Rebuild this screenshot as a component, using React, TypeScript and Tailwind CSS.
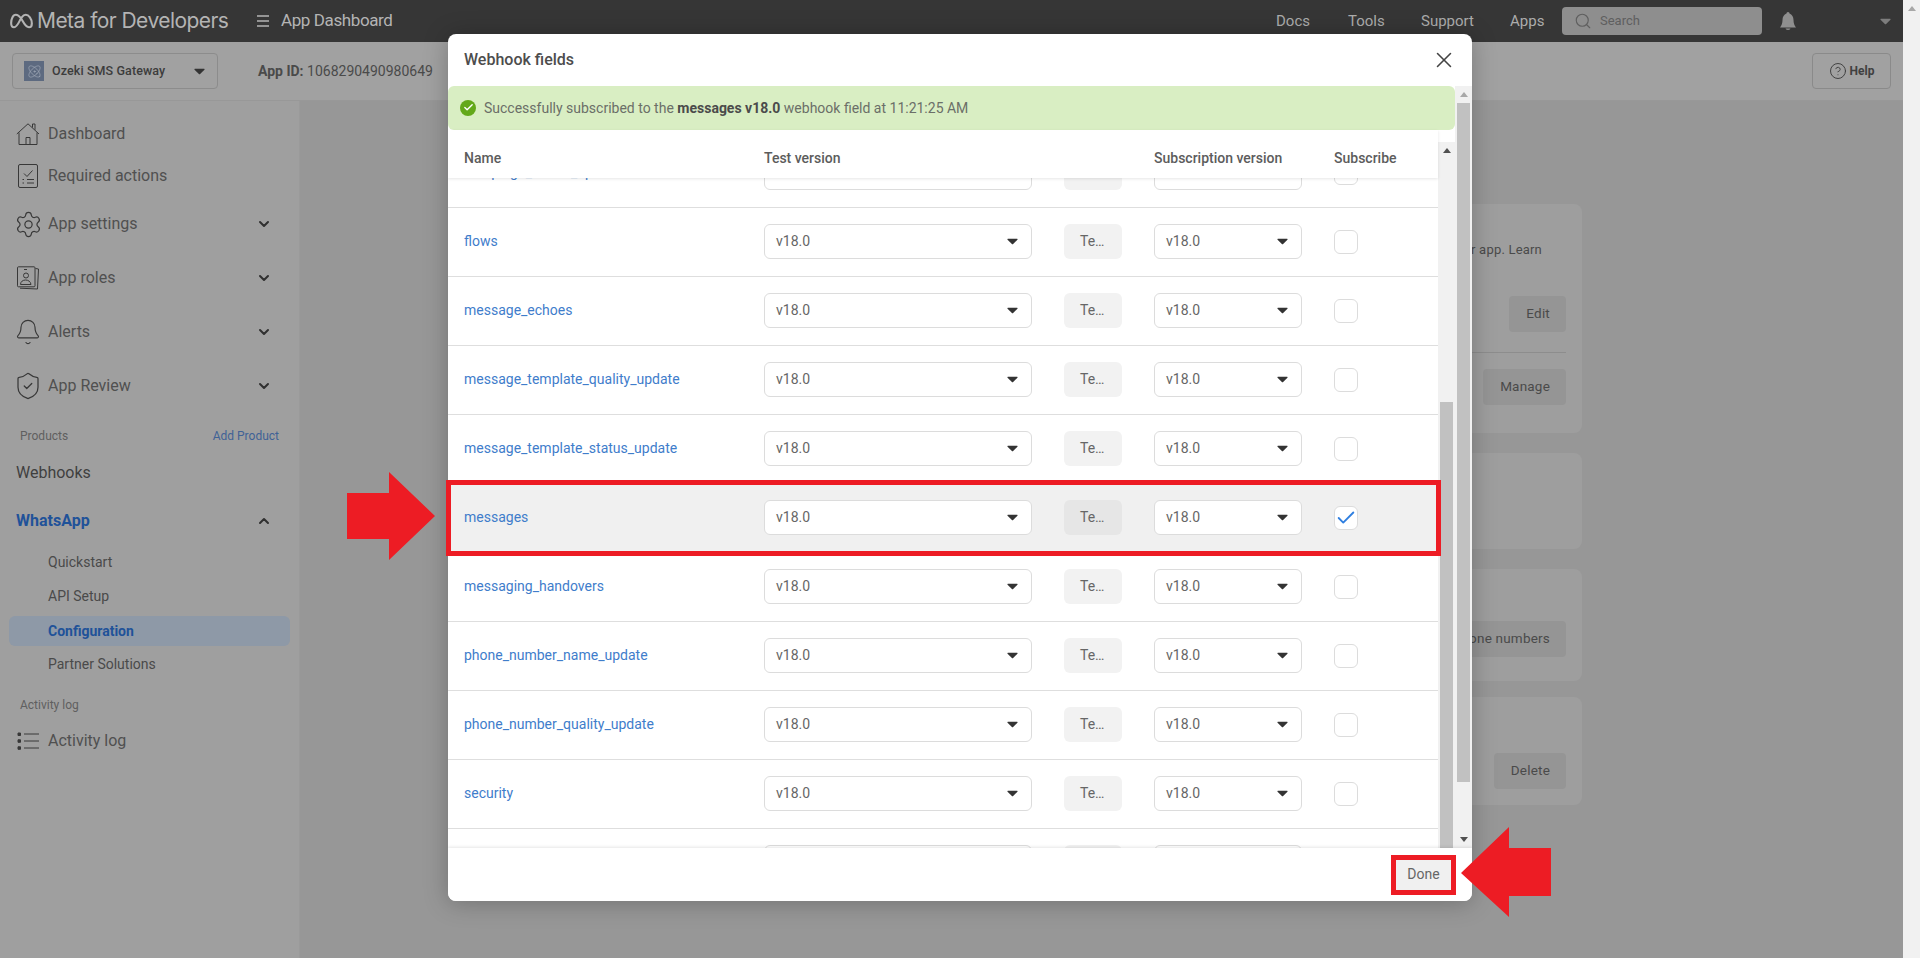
import { Atom, Bell, Check, ChevronDown, ChevronUp, CircleHelp, Search, Settings, ShieldCheck, X } from "lucide-react";
import type { ReactNode } from "react";

const fields = [
  "campaign_status_update",
  "flows",
  "message_echoes",
  "message_template_quality_update",
  "message_template_status_update",
  "messages",
  "messaging_handovers",
  "phone_number_name_update",
  "phone_number_quality_update",
  "security",
  "template_category_update",
];

const rowGrid = "grid grid-cols-[268px_268px_58px_148px_1fr] gap-x-8 items-center pl-4";

function Caret({ className }: { className: string }) {
  return (
    <svg viewBox="0 0 12 7" className={className} fill="currentColor">
      <path d="M1 0.5h10a.6.6 0 0 1 .4 1L6.4 6.4a.6.6 0 0 1-.8 0L.6 1.5A.6.6 0 0 1 1 .5z" />
    </svg>
  );
}

function ScrollArrow({ up, className }: { up?: boolean; className: string }) {
  return (
    <div className={`h-[17px] w-[17px] shrink-0 flex items-center justify-center ${className}`}>
      <svg viewBox="0 0 8 5" className="w-2 h-[5px]" fill="currentColor">
        <path d={up ? "M4 0l4 5H0z" : "M0 0h8L4 5z"} />
      </svg>
    </div>
  );
}

function HomeIcon() {
  return (
    <svg viewBox="0 0 24 24" className="w-6 h-6" fill="none" stroke="currentColor" strokeWidth="1">
      <path d="M0.8 12 12 1.8l11 10.2M3 10.5V22.500h18V10.500M10 22.500v-7h4v7M16.500 5.500V2h2.500v5.800" />
    </svg>
  );
}

function ChecklistIcon() {
  return (
    <svg viewBox="0 0 24 24" className="w-6 h-6" fill="none" stroke="currentColor" strokeWidth="1">
      <rect x="2.5" y="0.5" width="19" height="23" rx="1.5" />
      <path d="M8 9.500l3 3 5.500-6M11 15.500h7M11 19h7M6.500 15.500h1.500M6.500 19h1.500" />
    </svg>
  );
}

function RolesIcon() {
  return (
    <svg viewBox="0 0 24 24" className="w-6 h-6" fill="none" stroke="currentColor" strokeWidth="1">
      <path d="M19.500 2.500l3 .5-1 20-17.500-.8" />
      <rect x="1.5" y="0.8" width="17.5" height="20" rx="1" />
      <path d="M8 3.500h3" />
      <circle cx="10" cy="9.5" r="2.5" />
      <path d="M4.500 18.500c0-6 10-6 10.500 0z" />
    </svg>
  );
}

function ListIcon() {
  return (
    <svg viewBox="0 0 24 24" className="w-6 h-6" fill="none" stroke="currentColor" strokeWidth="1">
      <path d="M8 5h15M8 12h15M8 19h15" />
      <path d="M2 4h2.500v2.500H2zM2 10.800h2.500v2.500H2zM2 17.800h2.500v2.500H2z" fill="currentColor" />
    </svg>
  );
}

function NavItem({ icon, label, tall }: { icon: ReactNode; label: string; tall?: boolean }) {
  return (
    <div className={`flex items-center pl-4 pr-[27px] text-base text-[#505050] ${tall ? "h-[54px]" : "h-[42px]"}`}>
      <span className="w-6 h-6 mr-2 flex items-center justify-center text-[#383838]">{icon}</span>
      <span className="flex-1">{label}</span>
      {tall ? <ChevronDown size={16} strokeWidth={3} className="text-[#303030]" /> : null}
    </div>
  );
}

function SubItem({ label, active }: { label: string; active?: boolean }) {
  if (active) {
    return (
      <div className="h-[34px] pt-[3px]">
        <div className="mx-[9px] h-[30px] pl-[39px] pb-px flex items-center rounded-md bg-[#8e99a7] text-sm font-bold text-[#1f5299]">
          {label}
        </div>
      </div>
    );
  }
  return <div className="h-[34px] pl-12 flex items-center text-sm text-[#4a4a4a]">{label}</div>;
}

function Sidebar() {
  return (
    <aside className="w-[300px] shrink-0 pt-3 bg-[#9f9f9f] border-r border-[#9a9a9a]">
      <NavItem icon={<HomeIcon />} label="Dashboard" />
      <NavItem icon={<ChecklistIcon />} label="Required actions" />
      <NavItem tall icon={<Settings size={29} strokeWidth={1} className="shrink-0" />} label="App settings" />
      <NavItem tall icon={<RolesIcon />} label="App roles" />
      <NavItem tall icon={<Bell size={28} strokeWidth={1} className="shrink-0" />} label="Alerts" />
      <NavItem tall icon={<ShieldCheck size={30} strokeWidth={1} className="shrink-0" />} label="App Review" />
      <div className="mt-[11px] h-6 pl-5 pr-5 flex items-center justify-between text-xs">
        <span className="text-[#606060]">Products</span>
        <span className="text-[#3f6296]">Add Product</span>
      </div>
      <div className="mt-px h-12 pl-4 flex items-center text-base text-[#3f3f3f]">Webhooks</div>
      <div className="h-12 pl-4 pr-[27px] flex items-center justify-between text-base font-bold text-[#1f5299]">
        WhatsApp
        <ChevronUp size={16} strokeWidth={3} className="text-[#303030]" />
      </div>
      <div>
        <SubItem label="Quickstart" />
        <SubItem label="API Setup" />
        <SubItem label="Configuration" active />
        <SubItem label="Partner Solutions" />
      </div>
      <div className="mt-3 h-6 pl-5 flex items-center text-xs text-[#606060]">Activity log</div>
      <div className="h-12 pl-4 flex items-center text-base text-[#505050]">
        <span className="w-6 h-6 mr-2 text-[#383838]">
          <ListIcon />
        </span>
        Activity log
      </div>
    </aside>
  );
}

function TopBar() {
  return (
    <header className="h-[42px] shrink-0 flex items-center bg-[#363636] text-[#b4b4b4]">
      <svg viewBox="0 0 24 16" className="ml-[10px] w-[23px] h-[16px]" fill="none" stroke="currentColor" strokeWidth="2.2">
        <path d="M6 1.500C3 1.500 1.200 6 1.200 10c0 3 1.300 4.500 3 4.500C8 14.500 10 7 12 4.500c1.500-2 3-3 4.500-3 3 0 6.300 4 6.300 9 0 2.500-1 4-3 4C16 14.500 14 9 12 6 10 3 8 1.500 6 1.500z" />
      </svg>
      <span className="ml-1 w-[220px] font-['Inter',sans-serif] text-[21px] tracking-[-0.55px]">Meta for Developers</span>
      <svg viewBox="0 0 12 12" className="w-3 h-3" fill="none" stroke="currentColor" strokeWidth="1.4">
        <path d="M0 1h12M0 6h12M0 11h12" />
      </svg>
      <span className="ml-[12px] text-[17px] tracking-[-0.4px]">App Dashboard</span>
      <div className="ml-auto flex items-center text-[15px] text-[#acacac]">
        <span className="w-[72px]">Docs</span>
        <span className="w-[73px]">Tools</span>
        <span className="w-[89px]">Support</span>
        <span className="w-[52px]">Apps</span>
      </div>
      <div className="w-[200px] h-7 flex items-center pl-3 gap-2 rounded-sm bg-[#8e8e8e] text-[13px] text-[#5f5f5f]">
        <Search size={18} strokeWidth={1.5} />
        Search
      </div>
      <svg viewBox="0 0 18 18" className="ml-[17px] w-[18px] h-[18px] text-[#8f8f8f]" fill="currentColor">
        <path d="M9 0c1 0 1.500.8 1.500 1.500C13 2.500 14.500 5 14.500 8c0 3.500 1 5.500 2.500 7.500H1C2.500 13.500 3.500 11.500 3.500 8c0-3 1.500-5.500 4-6.500C7.500.8 8 0 9 0zM6.500 16.500h5a2.500 1.500 0 0 1-5 0z" />
      </svg>
      <Caret className="ml-[83px] mr-[12px] w-[11px] h-[7px] text-[#7d7d7d]" />
    </header>
  );
}

function SubHeader() {
  return (
    <div className="h-[59px] shrink-0 flex items-center pl-3 pr-3 bg-[#a1a1a1] border-b border-[#989898]">
      <div className="w-[206px] h-9 flex items-center pl-[11px] pr-3 rounded-sm border border-[#8c8c8c]">
        <span className="w-5 h-5 mr-2 flex items-center justify-center bg-[#5d6a80] text-[#a9b0bd]">
          <Atom size={15} strokeWidth={1} />
        </span>
        <span className="flex-1 text-[12.5px] tracking-[0.1px] font-medium text-[#3c3c3c]">Ozeki SMS Gateway</span>
        <Caret className="w-[11px] h-[7px] text-[#333333]" />
      </div>
      <div className="ml-10 text-sm text-[#4a4a4a]">
        <span className="font-bold">App ID:</span> 1068290490980649
      </div>
      <div className="ml-auto w-[79px] h-9 flex items-center justify-center gap-[3px] rounded-sm border border-[#8a8a8a] text-xs font-bold text-[#404040]">
        <CircleHelp size={18} strokeWidth={1.3} />
        Help
      </div>
    </div>
  );
}

function Card({ className, children }: { className: string; children?: ReactNode }) {
  return <div className={`w-[960px] rounded-lg bg-[#9e9e9e] flex flex-col items-end pr-4 ${className}`}>{children}</div>;
}

function CardButton({ children, className }: { children: ReactNode; className: string }) {
  return (
    <div className={`h-9 flex items-center justify-end pr-4 pb-0.5 rounded-sm bg-[#959595] text-[13.5px] tracking-[0.2px] whitespace-nowrap text-[#4a4a4a] ${className}`}>
      {children}
    </div>
  );
}

function Content() {
  return (
    <main className="flex-1 flex flex-col items-end pt-[103px] pr-[321px] bg-[#979797] text-[#4a4a4a]">
      <Card className="h-[229px] pt-[36px] mb-5">
        <div className="h-[18px] pr-6 text-[13px] tracking-[0.2px]">Configure webhooks for your app. Learn</div>
        <CardButton className="mt-[38px] w-[57px]">Edit</CardButton>
        <div className="mt-5 w-full border-t border-[#8d8d8d]" />
        <CardButton className="mt-4 w-[83px]">Manage</CardButton>
      </Card>
      <Card className="h-[96px] mb-5" />
      <Card className="h-[112px] mb-4 pt-[52px]">
        <CardButton className="w-[200px]">Manage phone numbers</CardButton>
      </Card>
      <Card className="h-[108px] pt-[56px]">
        <CardButton className="w-[72px]">Delete</CardButton>
      </Card>
    </main>
  );
}

function FieldSelect() {
  return (
    <div className="h-[35px] flex items-center justify-between pl-[11px] pr-[13px] pb-px rounded-md border border-[#dcdcdc] bg-white text-sm text-[#666666]">
      v18.0
      <Caret className="w-[11px] h-[7px] text-[#333333]" />
    </div>
  );
}

function FieldRow({ name }: { name: string }) {
  const on = name === "messages";
  return (
    <div className={`${rowGrid} pt-4 pb-[17px] border-b border-[#dedede] ${on ? "bg-[#f0f0f0]" : "bg-white"}`}>
      <span className="pb-0.5 text-sm text-[#3f7dcb]">{name}</span>
      <FieldSelect />
      <div className={`h-[35px] pl-4 pb-px flex items-center rounded-md text-sm text-[#666666] ${on ? "bg-[#e6e6e6]" : "bg-[#f2f2f2]"}`}>
        Te…
      </div>
      <FieldSelect />
      <div className="w-6 h-6 flex items-center justify-center rounded-md border border-[#dcdcdc] bg-white">
        {on ? <Check size={22} strokeWidth={2} className="shrink-0 text-[#2f7fe0]" /> : null}
      </div>
    </div>
  );
}

function WebhookModal() {
  return (
    <div className="absolute left-[448px] top-[34px] w-[1024px] h-[867px] isolate flex flex-col rounded-lg bg-white overflow-hidden shadow-[0_2px_24px_rgba(0,0,0,0.25)]">
      <div className="h-[52px] shrink-0 flex items-center justify-between pl-4 pr-[15px]">
        <h2 className="text-base font-medium text-[#4d4d4d]">Webhook fields</h2>
        <X size={26} strokeWidth={1.4} className="text-[#444444]" />
      </div>
      <div className="flex-1 min-h-0 flex">
        <div className="w-[1007px] flex flex-col">
          <div className="h-11 shrink-0 flex items-center pl-3 pb-px gap-2 rounded-md bg-[#d9eec3] text-sm text-[#6b6f68]">
            <span className="w-4 h-4 flex items-center justify-center rounded-full bg-[#63a81a]">
              <Check size={11} strokeWidth={3} className="text-white" />
            </span>
            <span>
              Successfully subscribed to the <b className="font-bold text-[#4b4b4b]">messages v18.0</b> webhook field at 11:21:25 AM
            </span>
          </div>
          <div className="flex-1 min-h-0 flex">
            <div className="w-[990px] flex flex-col min-h-0">
              <div className={`${rowGrid} h-[48px] shrink-0 pt-[7px] relative z-10 bg-white shadow-[0_1px_3px_rgba(0,0,0,0.1)] text-sm font-medium text-[#5c5c5c]`}>
                <span>Name</span>
                <span>Test version</span>
                <span />
                <span>Subscription version</span>
                <span>Subscribe</span>
              </div>
              <div className="flex-1 min-h-0 overflow-hidden">
                <div className="-mt-[39px]">
                  {fields.map((f) => (
                    <FieldRow key={f} name={f} />
                  ))}
                </div>
              </div>
            </div>
            <div className="w-[17px] mt-3 flex flex-col bg-[#f1f1f1]">
              <ScrollArrow up className="text-[#505050]" />
              <div className="mt-[243px] mx-[2px] flex-1 bg-[#c1c1c1]" />
            </div>
          </div>
        </div>
        <div className="w-[17px] flex flex-col bg-[#f1f1f1]">
          <ScrollArrow up className="text-[#a8a8a8]" />
          <div className="mx-[2px] h-[679px] bg-[#c1c1c1]" />
          <ScrollArrow className="mt-auto text-[#505050]" />
        </div>
      </div>
      <div className="h-[53px] shrink-0 relative z-10 flex items-center justify-end pr-4 bg-white shadow-[0_-1px_3px_rgba(0,0,0,0.1)]">
        <div className="w-[65px] h-10 pb-px flex items-center justify-center border-[5px] border-[#ed1c24] bg-[#f0f0f0] text-sm text-[#666666]">
          Done
        </div>
      </div>
    </div>
  );
}

function Annotations() {
  return (
    <>
      <div className="absolute left-[446px] top-[480px] w-[995px] h-[76px] border-[5px] border-[#ed1c24]" />
      <svg viewBox="0 0 88 88" className="absolute left-[347px] top-[472px] w-[88px] h-[88px] text-[#ed1c24]" fill="currentColor">
        <path d="M0 21h42V0l46 44-46 44V67H0z" />
      </svg>
      <svg viewBox="0 0 90 90" className="absolute left-[1461px] top-[827px] w-[90px] h-[90px] text-[#ed1c24]" fill="currentColor">
        <path d="M90 21H48V0L0 46l48 44V69h42z" />
      </svg>
    </>
  );
}

export default function App() {
  return (
    <div className="relative w-[1920px] h-[958px] flex overflow-hidden font-['Roboto',sans-serif] bg-[#f1f1f1]">
      <div className="w-[1903px] flex flex-col">
        <TopBar />
        <SubHeader />
        <div className="flex-1 flex min-h-0">
          <Sidebar />
          <Content />
        </div>
      </div>
      <ScrollArrow up className="text-[#a8a8a8]" />
      <WebhookModal />
      <Annotations />
    </div>
  );
}
